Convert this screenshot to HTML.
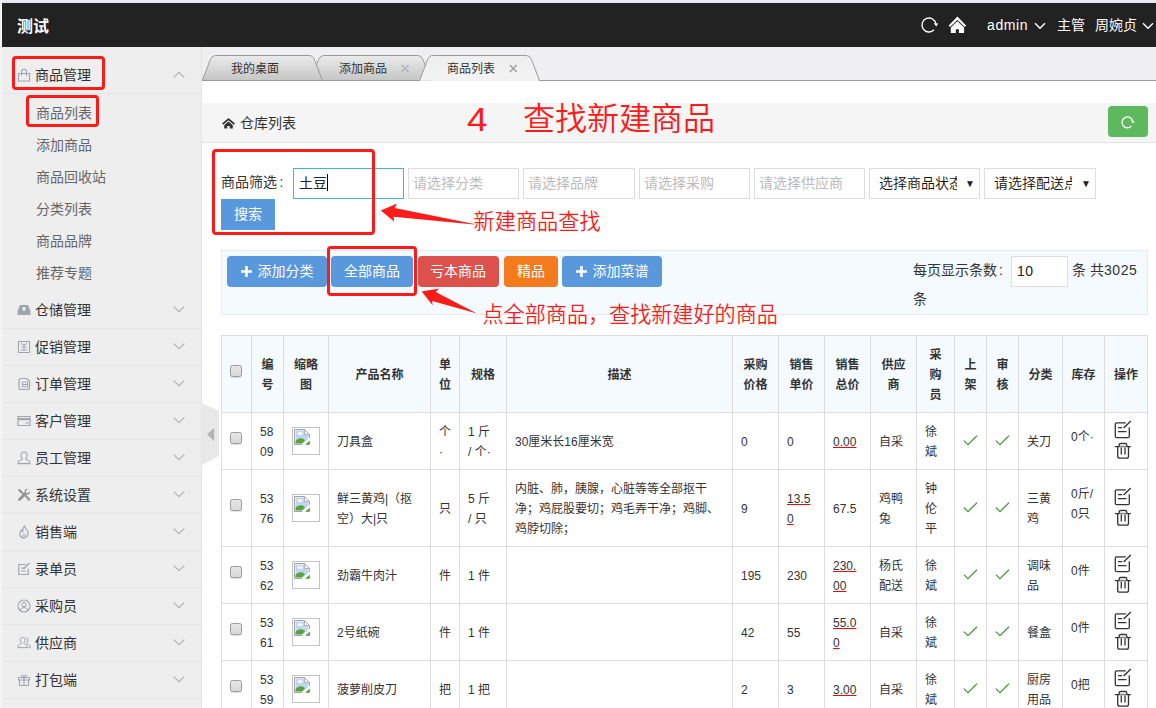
<!DOCTYPE html>
<html lang="zh-CN">
<head>
<meta charset="utf-8">
<title>测试</title>
<style>
*{box-sizing:border-box;margin:0;padding:0}
html,body{width:1156px;height:708px;overflow:hidden;background:#fff}
body{font-family:"Liberation Sans","Noto Sans CJK SC",sans-serif;font-size:14px;color:#333;position:relative}
.abs{position:absolute}
#topstrip{left:0;top:0;width:1156px;height:3px;background:linear-gradient(#ebedf2,#dfe6f5)}
#leftstrip{left:0;top:0;width:2px;height:708px;background:linear-gradient(90deg,#efefef,#fbfbfb);z-index:2}
#header{left:2px;top:3px;width:1154px;height:44px;background:#222}
#header .logo{left:15px;top:1.5px;line-height:44px;color:#fff;font-size:16px;font-weight:700;white-space:nowrap}
#header .r{color:#fff;font-size:14px;line-height:44px;top:0;white-space:nowrap}
#side{left:2px;top:47px;width:200px;height:661px;background:#eee;border-right:1px solid #e4e4e4}
.mi{position:absolute;left:0;width:199px;height:37px;border-bottom:1px solid #e5e5e5;line-height:36px;color:#333;font-size:14px;white-space:nowrap}
.mi .t{position:absolute;left:33px;top:0}
.mi svg.ic{position:absolute;left:15px;top:11px}
.mi svg.ar{position:absolute;left:171px;top:14px}
.si{position:absolute;left:34px;height:32px;line-height:32px;color:#666;font-size:14px;white-space:nowrap}
.redbox{position:absolute;border:3px solid #fb1c1a;border-radius:4px}
#tabbar{left:202px;top:47px;width:954px;height:34px;background:#efeef0}
#tabbar .tt{position:absolute;top:14px;font-size:12px;line-height:16px;color:#333;white-space:nowrap}
#crumb{left:202px;top:103px;width:954px;height:40px;background:#f5f5f5;border-bottom:1px solid #e5e5e5}
.red{color:#fb1c1a;white-space:nowrap;position:absolute;font-family:"Liberation Sans","Noto Sans CJK SC",sans-serif;font-weight:350}
.inp{position:absolute;top:168px;width:111px;height:31px;border:1px solid #ddd;background:#fff;font-size:14px;line-height:29px;padding-left:5px;color:#bbb;white-space:nowrap;overflow:hidden}
.sel{color:#111;font-weight:350}
.btn{position:absolute;height:31px;line-height:31px;color:#fff;font-size:14px;text-align:center;white-space:nowrap}
.rbtn{top:256px;border-radius:4px}
#tool{left:221px;top:250px;width:927px;height:65px;background:#f5fafe;border:1px solid #e6eaee}
table{position:absolute;left:221px;top:335px;width:927px;border-collapse:collapse;table-layout:fixed;font-size:12px;line-height:20px;color:#333}
th,td{border:1px solid #ddd;padding:9px 8px 7px;vertical-align:middle;text-align:left;word-break:break-all;overflow:hidden}
th{background:#f5fafe;font-weight:bold;text-align:center;height:77px}
td.c,th.c{text-align:center}
.cb{display:inline-block;width:12px;height:12px;margin-left:-1px;border:1px solid #9c9c9c;border-radius:2.5px;background:linear-gradient(#e6e6e6,#d8d8d8);vertical-align:middle;position:relative;top:-5px;box-shadow:0 1px 1px rgba(0,0,0,.12)}
.th{display:block;width:28px;height:28px;top:-1px;border:1px solid #c4c4c4;background:#fff;position:relative}
.u{text-decoration:underline;text-decoration-color:#f00;color:#333}
.stk{position:relative;top:-5px;display:block}
.op{display:block;margin:0 0 0 -0.5px;position:relative;top:-2.5px}
</style>
</head>
<body>
<div id="topstrip" class="abs"></div>
<div id="leftstrip" class="abs"></div>
<div id="header" class="abs">
  <div class="abs logo">测试</div>
  <svg class="abs" style="left:915.5px;top:11.2px" width="22" height="22" viewBox="0 0 22 22"><path d="M16.04 15.86 A7 7 0 1 1 17.93 10.03" fill="none" stroke="#fff" stroke-width="1.4"/><path d="M15.70 9.13 L20.30 9.60 L18.30 12.59 Z" fill="#fff"/></svg>
  <svg class="abs" style="left:946px;top:13px" width="20" height="18" viewBox="0 0 20 18"><path d="M9.4 0.6 L0.7 9.5 L2.0 10.9 L9.4 3.9 L16.8 10.9 L18.1 9.5 Z" fill="#fff"/><path d="M9.4 5.2 L2.8 11.4 V16.9 H7.8 V13.2 H10.9 V16.9 H16.1 V11.4 Z" fill="#fff"/></svg>
  <div class="abs r" style="left:985px;letter-spacing:0.6px">admin</div>
  <svg class="abs" style="left:1032px;top:19px" width="12" height="8" viewBox="0 0 12 8"><path d="M1 1.2 L6 6.2 L11 1.2" fill="none" stroke="#fff" stroke-width="1.4"/></svg>
  <div class="abs r" style="left:1055px">主管</div>
  <div class="abs r" style="left:1093px">周婉贞</div>
  <svg class="abs" style="left:1140px;top:19px" width="12" height="8" viewBox="0 0 12 8"><path d="M1 1.2 L6 6.2 L11 1.2" fill="none" stroke="#fff" stroke-width="1.4"/></svg>
</div>
<div id="side" class="abs">
<div class="mi" style="top:10px"><svg class="ic" width="14" height="14" viewBox="0 0 14 14"><path d="M1.5 5.5 H12.5 V13 H1.5 Z" fill="none" stroke="#9fa5b0" stroke-width="1.1"/><path d="M4.6 8 V3.6 A2.4 2.4 0 0 1 9.4 3.6 V8" fill="none" stroke="#9fa5b0" stroke-width="1.1"/></svg><span class="t">商品管理</span><svg class="ar" width="12" height="8" viewBox="0 0 12 8"><path d="M0.8 6.4 L6 1.4 L11.2 6.4" fill="none" stroke="#b2b2b2" stroke-width="1.2"/></svg></div>
<div class="si" style="top:50px">商品列表</div>
<div class="si" style="top:82px">添加商品</div>
<div class="si" style="top:114px">商品回收站</div>
<div class="si" style="top:146px">分类列表</div>
<div class="si" style="top:178px">商品品牌</div>
<div class="si" style="top:210px">推荐专题</div>
<div class="mi" style="top:245px"><svg class="ic" width="14" height="14" viewBox="0 0 14 14"><path d="M3 2 H11 L13.5 8 V12 H0.5 V8 Z" fill="#9fa5b0"/><path d="M7 3.4 L9.6 6 H8 V8 H6 V6 H4.4 Z" fill="#eee"/></svg><span class="t">仓储管理</span><svg class="ar" width="12" height="8" viewBox="0 0 12 8"><path d="M0.8 0.6 L6 5.6 L11.2 0.6" fill="none" stroke="#b2b2b2" stroke-width="1.2"/></svg></div>
<div class="mi" style="top:282px"><svg class="ic" width="14" height="14" viewBox="0 0 14 14"><path d="M1.5 1.5 H12.5 V12.5 H1.5 Z" fill="none" stroke="#9fa5b0" stroke-width="1.1"/><path d="M4 3.5 L7 5 L10 3.5 M7 5 V10 M4.5 7 H9.5 M4 10 H10" fill="none" stroke="#9fa5b0" stroke-width="1"/></svg><span class="t">促销管理</span><svg class="ar" width="12" height="8" viewBox="0 0 12 8"><path d="M0.8 0.6 L6 5.6 L11.2 0.6" fill="none" stroke="#b2b2b2" stroke-width="1.2"/></svg></div>
<div class="mi" style="top:319px"><svg class="ic" width="14" height="14" viewBox="0 0 14 14"><path d="M4 1.5 H10 L12.5 4 V10.5 Q12.5 12.5 10.5 12.5 H4 Q2 12.5 2 10.5 V3.5 Q2 1.5 4 1.5 Z" fill="none" stroke="#9fa5b0" stroke-width="1.2"/><path d="M5.5 5 H10.5 V10 H5.5 Z M5.5 7.5 H10.5" fill="none" stroke="#9fa5b0" stroke-width="1"/></svg><span class="t">订单管理</span><svg class="ar" width="12" height="8" viewBox="0 0 12 8"><path d="M0.8 0.6 L6 5.6 L11.2 0.6" fill="none" stroke="#b2b2b2" stroke-width="1.2"/></svg></div>
<div class="mi" style="top:356px"><svg class="ic" width="14" height="14" viewBox="0 0 14 14"><path d="M1 2.5 H13 V11.5 H1 Z" fill="none" stroke="#9fa5b0" stroke-width="1.2"/><path d="M1 4 H13 V6.2 H1 Z" fill="#9fa5b0"/><path d="M8.5 9 H11.5" stroke="#9fa5b0" stroke-width="1.2"/></svg><span class="t">客户管理</span><svg class="ar" width="12" height="8" viewBox="0 0 12 8"><path d="M0.8 0.6 L6 5.6 L11.2 0.6" fill="none" stroke="#b2b2b2" stroke-width="1.2"/></svg></div>
<div class="mi" style="top:393px"><svg class="ic" width="14" height="14" viewBox="0 0 14 14"><path d="M7 1 C9 1 10 2.4 10 4.2 C10 6 9.2 7 8.6 7.6 C8.6 8.6 9.6 9 11 9.6 C12.4 10.2 13 10.8 13 12.6 H1 C1 10.8 1.6 10.2 3 9.6 C4.4 9 5.4 8.6 5.4 7.6 C4.8 7 4 6 4 4.2 C4 2.4 5 1 7 1 Z" fill="none" stroke="#9fa5b0" stroke-width="1.1"/></svg><span class="t">员工管理</span><svg class="ar" width="12" height="8" viewBox="0 0 12 8"><path d="M0.8 0.6 L6 5.6 L11.2 0.6" fill="none" stroke="#b2b2b2" stroke-width="1.2"/></svg></div>
<div class="mi" style="top:430px"><svg class="ic" width="14" height="14" viewBox="0 0 14 14"><path d="M1.2 1.2 L3 1 L7.6 6 L6.4 7.2 L1.4 3 Z" fill="#969696"/><path d="M12.8 3.2 L10.8 5.2 L9 4.8 L8.8 3 L10.8 1 C9 0.4 7.4 1.6 7.6 4 L1.2 11 C0.4 12 2 13.6 3 12.8 L10 6.4 C12.2 6.8 13.6 5 12.8 3.2 Z" fill="#969696"/><path d="M8 8.4 L9.4 7 L13 10.8 C13.8 11.8 12.4 13.4 11.4 12.4 Z" fill="#969696"/></svg><span class="t">系统设置</span><svg class="ar" width="12" height="8" viewBox="0 0 12 8"><path d="M0.8 0.6 L6 5.6 L11.2 0.6" fill="none" stroke="#b2b2b2" stroke-width="1.2"/></svg></div>
<div class="mi" style="top:467px"><svg class="ic" width="14" height="14" viewBox="0 0 14 14"><path d="M7.4 0.8 C7.8 3 10 4.2 10.8 6.4 C11.8 9.4 10 13 7 13 C4 13 2.2 10.4 3 7.6 C3.4 6.4 4 5.8 4.4 5 C4.8 6 5 6.4 5.8 6.8 C5.6 4.4 6 2.4 7.4 0.8 Z" fill="none" stroke="#9fa5b0" stroke-width="1.1"/><path d="M7 13 C5.6 12.4 5.2 10.8 6.2 9.6 C6.6 10.4 7.4 10.2 7.6 9 C8.8 10 8.8 12.4 7 13 Z" fill="none" stroke="#9fa5b0" stroke-width="0.9"/></svg><span class="t">销售端</span><svg class="ar" width="12" height="8" viewBox="0 0 12 8"><path d="M0.8 0.6 L6 5.6 L11.2 0.6" fill="none" stroke="#b2b2b2" stroke-width="1.2"/></svg></div>
<div class="mi" style="top:504px"><svg class="ic" width="14" height="14" viewBox="0 0 14 14"><path d="M9 2.5 H1.8 V12.5 H11.2 V6.5" fill="none" stroke="#9fa5b0" stroke-width="1.2"/><path d="M6.5 7 L12.5 1" stroke="#9fa5b0" stroke-width="1.3"/><path d="M4 6 H7 M4 9 H9" stroke="#9fa5b0" stroke-width="1.1"/></svg><span class="t">录单员</span><svg class="ar" width="12" height="8" viewBox="0 0 12 8"><path d="M0.8 0.6 L6 5.6 L11.2 0.6" fill="none" stroke="#b2b2b2" stroke-width="1.2"/></svg></div>
<div class="mi" style="top:541px"><svg class="ic" width="14" height="14" viewBox="0 0 14 14"><circle cx="7" cy="7" r="6" fill="none" stroke="#9fa5b0" stroke-width="1.1"/><circle cx="7" cy="5.6" r="2.1" fill="none" stroke="#9fa5b0" stroke-width="1"/><path d="M3.2 11.4 C3.6 9.2 5.2 8.6 7 8.6 C8.8 8.6 10.4 9.2 10.8 11.4" fill="none" stroke="#9fa5b0" stroke-width="1"/></svg><span class="t">采购员</span><svg class="ar" width="12" height="8" viewBox="0 0 12 8"><path d="M0.8 0.6 L6 5.6 L11.2 0.6" fill="none" stroke="#b2b2b2" stroke-width="1.2"/></svg></div>
<div class="mi" style="top:578px"><svg class="ic" width="14" height="14" viewBox="0 0 14 14"><path d="M5.6 1.4 C7.2 1.4 8 2.6 8 4 C8 5.4 7.4 6.4 6.8 6.9 C6.8 7.8 7.6 8.2 8.8 8.7 C10 9.2 10.4 9.8 10.4 11.6 H0.8 C0.8 9.8 1.2 9.2 2.4 8.7 C3.6 8.2 4.4 7.8 4.4 6.9 C3.8 6.4 3.2 5.4 3.2 4 C3.2 2.6 4 1.4 5.6 1.4 Z" fill="none" stroke="#9fa5b0" stroke-width="1"/><path d="M8.6 1.6 C10.2 1.4 11 2.8 11 4 C11 5.4 10.4 6.4 9.8 6.9 C9.8 7.8 10.4 8.2 11.4 8.6 C12.8 9.2 13.2 9.8 13.2 11.6 H11.6" fill="none" stroke="#9fa5b0" stroke-width="1"/></svg><span class="t">供应商</span><svg class="ar" width="12" height="8" viewBox="0 0 12 8"><path d="M0.8 0.6 L6 5.6 L11.2 0.6" fill="none" stroke="#b2b2b2" stroke-width="1.2"/></svg></div>
<div class="mi" style="top:615px"><svg class="ic" width="14" height="14" viewBox="0 0 14 14"><path d="M1.5 4.5 H12.5 V7 H1.5 Z M2.5 7 V12.5 H11.5 V7 M7 4.5 V12.5" fill="none" stroke="#9fa5b0" stroke-width="1.1"/><path d="M7 4.3 C5.4 4 4 3.2 4.6 2.2 C5.2 1.2 6.6 2.4 7 4.3 C7.4 2.4 8.8 1.2 9.4 2.2 C10 3.2 8.6 4 7 4.3 Z" fill="none" stroke="#9fa5b0" stroke-width="1"/></svg><span class="t">打包端</span><svg class="ar" width="12" height="8" viewBox="0 0 12 8"><path d="M0.8 0.6 L6 5.6 L11.2 0.6" fill="none" stroke="#b2b2b2" stroke-width="1.2"/></svg></div>
<div class="mi" style="top:652px"></div>
</div>
<div class="redbox" style="left:12px;top:56px;width:93px;height:34px"></div>
<div class="redbox" style="left:26px;top:95px;width:73px;height:32px"></div>
<svg class="abs" style="left:202px;top:403px" width="18" height="63" viewBox="0 0 18 63"><path d="M0 0 L17 8 L17 53 L0 62 Z" fill="#e8e8e8"/><path d="M12.2 25 L5 31.5 L12.2 38 Z" fill="#b2b2b2"/></svg>
<div id="tabbar" class="abs">
<svg class="abs" style="left:0;top:0" width="954" height="34" viewBox="0 0 954 34">
<defs><linearGradient id="tg" x1="0" y1="0" x2="0" y2="1"><stop offset="0" stop-color="#ebebeb"/><stop offset="1" stop-color="#c6c6c6"/></linearGradient>
<linearGradient id="ta" x1="0" y1="0" x2="0" y2="1"><stop offset="0" stop-color="#eeeeef"/><stop offset="1" stop-color="#f3f3f3"/></linearGradient></defs>
<path d="M108.5 33.5 L116.5 12.6 Q118.1 8.5 121.7 8.5 L215.8 8.5 Q219.4 8.5 221.0 12.6 L229 33.5" fill="url(#tg)" stroke="#9a9a9a" stroke-width="1"/>
<path d="M0.3 33.5 L8.3 12.6 Q9.9 8.5 13.5 8.5 L107.2 8.5 Q110.8 8.5 112.4 12.6 L120.4 33.5" fill="url(#tg)" stroke="#9a9a9a" stroke-width="1"/>
<path d="M0 33.5 H218 M337 33.5 H954" stroke="#9a9a9a" stroke-width="1"/>
<path d="M217.6 33.5 L225.6 12.6 Q227.2 8.5 230.8 8.5 L324.3 8.5 Q327.9 8.5 329.5 12.6 L337.5 33.5" fill="url(#ta)" stroke="#9a9a9a" stroke-width="1"/>
<path d="M199.6 18 l7 7 m0 -7 l-7 7" stroke="#aab0ba" stroke-width="1.2"/>
<path d="M307.8 18 l7 7 m0 -7 l-7 7" stroke="#999" stroke-width="1.2"/>
</svg>
<div class="tt" style="left:29px">我的桌面</div>
<div class="tt" style="left:137px">添加商品</div>
<div class="tt" style="left:245px">商品列表</div>
</div>
<div id="crumb" class="abs">
<svg class="abs" style="left:20px;top:15px" width="13" height="11" viewBox="0 0 13 11"><path d="M6.5 0 L0 5.6 L1.3 6.8 L6.5 2.3 L11.7 6.8 L13 5.6 Z" fill="#333"/><path d="M6.5 3.6 L2.2 7.3 V10.6 H5.3 V8 H7.7 V10.6 H10.8 V7.3 Z" fill="#333"/></svg>
<div class="abs" style="left:38px;top:0;line-height:40px;font-size:14px;color:#333;white-space:nowrap">仓库列表</div>
<div class="abs" style="left:906px;top:3px;width:40px;height:31px;background:#5eb95e;border-radius:4px"></div>
<svg class="abs" style="left:916.0px;top:9.5px" width="18.8" height="18.8" viewBox="0 0 18.8 18.8"><path d="M13.28 13.15 A5.4 5.4 0 1 1 14.75 8.65" fill="none" stroke="#fff" stroke-width="1.3"/><path d="M12.90 7.76 L16.70 8.14 L15.10 10.61 Z" fill="#fff"/></svg>
</div>
<div class="red" style="left:467px;top:95.6px;font-size:34px;line-height:46px;transform:scaleX(1.09);transform-origin:0 0">4</div>
<div class="red" style="left:523px;top:96px;font-size:32px;line-height:46px">查找新建商品</div>
<div class="abs" style="left:221px;top:168px;line-height:29px;font-size:14px;color:#333;white-space:nowrap">商品筛选<span style="margin-left:2.5px">:</span></div>
<div class="inp" style="left:293px;border-color:#3bb4f2;color:#222">土豆<span style="display:inline-block;width:1px;height:17px;background:#000;vertical-align:-3px"></span></div>
<div class="inp" style="left:408px;padding-left:4px;width:111px">请选择分类</div>
<div class="inp" style="left:523px;padding-left:4px;width:112px">请选择品牌</div>
<div class="inp" style="left:639px;padding-left:4px;width:111px">请选择采购</div>
<div class="inp" style="left:754px;padding-left:4px;width:111px">请选择供应商</div>
<div class="inp sel" style="left:869px;padding-left:9px;width:111px"><span style="display:inline-block;width:78px;overflow:hidden;vertical-align:top">选择商品状态</span><span style="position:absolute;right:4px;top:0;font-size:10px;color:#222">▼</span></div>
<div class="inp sel" style="left:984px;padding-left:9px;width:112px"><span style="display:inline-block;width:78px;overflow:hidden;vertical-align:top">请选择配送点</span><span style="position:absolute;right:4px;top:0;font-size:10px;color:#222">▼</span></div>
<div class="btn" style="left:221px;top:199px;width:54px;background:#5a98de">搜索</div>
<div class="redbox" style="left:212px;top:149px;width:163px;height:86px"></div>
<svg class="abs" style="left:378px;top:200px" width="100" height="28" viewBox="378 200 100 28"><path d="M380.8 210.5 L397.1 203.6 L394.6 207.9 L474.2 224 L474.2 224.5 L393.6 216.7 L394.1 221.5 Z" fill="#fb1c1a"/></svg>
<div class="red" style="left:473.5px;top:207px;font-size:21.2px;line-height:30px">新建商品查找</div>
<div id="tool" class="abs"></div>
<div class="btn rbtn" style="left:227px;width:100px;background:#5a98de"><svg width="11" height="11" viewBox="0 0 11 11" style="margin-right:6px;position:relative;top:0.5px"><path d="M5.5 0 V11 M0 5.5 H11" stroke="#fff" stroke-width="2.6"/></svg>添加分类</div>
<div class="btn rbtn" style="left:331px;width:82px;background:#5a98de">全部商品</div>
<div class="btn rbtn" style="left:417.6px;width:81px;background:#dd514c">亏本商品</div>
<div class="btn rbtn" style="left:504px;width:54px;background:#f37b1d">精品</div>
<div class="btn rbtn" style="left:562px;width:100px;background:#5a98de"><svg width="11" height="11" viewBox="0 0 11 11" style="margin-right:6px;position:relative;top:0.5px"><path d="M5.5 0 V11 M0 5.5 H11" stroke="#fff" stroke-width="2.6"/></svg>添加菜谱</div>
<div class="abs" style="left:913px;top:255px;line-height:30px;font-size:14px;color:#333;white-space:nowrap">每页显示条数<span style="margin-left:2px">:</span></div>
<div class="abs" style="left:1011px;top:256px;width:57px;height:31px;border:1px solid #ddd;background:#fff;line-height:29px;padding-left:5px;font-size:14px;color:#222;letter-spacing:0.5px">10</div>
<div class="abs" style="left:1072px;top:255px;line-height:30px;font-size:14px;color:#333;white-space:nowrap">条 共<span style="letter-spacing:0.6px">3025</span></div>
<div class="abs" style="left:913px;top:284px;line-height:30px;font-size:14px;color:#333;white-space:nowrap">条</div>
<div class="redbox" style="left:327px;top:246px;width:90px;height:50px"></div>
<svg class="abs" style="left:418px;top:284px" width="64" height="34" viewBox="418 284 64 34"><path d="M421.7 291.5 L439.2 288.4 L435.7 292.1 L477 313.6 L432.2 301 L432.6 305.3 Z" fill="#fb1c1a"/></svg>
<div class="red" style="left:482.5px;top:299.5px;font-size:21.1px;line-height:30px">点全部商品，查找新建好的商品</div>
<table><colgroup><col style="width:30px"><col style="width:32px"><col style="width:45px"><col style="width:102px"><col style="width:29px"><col style="width:47px"><col style="width:226px"><col style="width:46px"><col style="width:46px"><col style="width:46px"><col style="width:46px"><col style="width:38px"><col style="width:32px"><col style="width:32px"><col style="width:44px"><col style="width:42px"><col style="width:43px"></colgroup>
<thead><tr><th><span class="cb"></span></th><th>编<br>号</th><th>缩略<br>图</th><th>产品名称</th><th>单<br>位</th><th>规格</th><th>描述</th><th>采购<br>价格</th><th>销售<br>单价</th><th>销售<br>总价</th><th>供应<br>商</th><th>采<br>购<br>员</th><th>上<br>架</th><th>审<br>核</th><th>分类</th><th>库存</th><th>操作</th></tr></thead>
<tbody>
<tr style="height:57px"><td class="c"><span class="cb"></span></td><td>58<br>09</td><td><span class="th"><svg style="position:absolute;left:1px;top:1px" width="17" height="17" viewBox="0 0 17 17"><path d="M0.5 0.5 H10.5 L15.5 5.5 V15.5 H0.5 Z" fill="#fff" stroke="#a4a4a4" stroke-width="1"/><path d="M1.5 1.5 H10 L14.5 6 V14.5 H1.5 Z" fill="#c2d6f2"/><path d="M10.5 0.5 V5.5 H15.5 Z" fill="#f4f4f4" stroke="#a4a4a4" stroke-width="0.8"/><ellipse cx="6" cy="4.6" rx="2.6" ry="1.3" fill="#fff"/><path d="M1.5 14.5 V12 C4 8.6 8.5 8.6 11 11.2 L8 14.5 Z" fill="#57a53a"/><path d="M7.4 16 L16 8.6 V11.4 L11 16 Z" fill="#fff"/><path d="M11.4 15.5 L15.5 11.8 V15.5 Z" fill="#57a53a"/><path d="M0.5 15.5 H8" stroke="#a4a4a4" stroke-width="1"/></svg></span></td><td>刀具盒</td><td>个<br>·</td><td>1 斤<br>/ 个·</td><td>30厘米长16厘米宽</td><td>0</td><td>0</td><td><span class="u">0.00</span></td><td>自采</td><td>徐<br>斌</td><td class="c"><svg width="15" height="11" viewBox="0 0 15 11" style="vertical-align:middle;position:relative;top:-2px"><path d="M0.8 5.6 L5 9.6 L14 0.8" fill="none" stroke="#46983a" stroke-width="1.25"/></svg></td><td class="c"><svg width="15" height="11" viewBox="0 0 15 11" style="vertical-align:middle;position:relative;top:-2px"><path d="M0.8 5.6 L5 9.6 L14 0.8" fill="none" stroke="#46983a" stroke-width="1.25"/></svg></td><td>关刀</td><td><span class="stk">0个·</span></td><td><svg class="op" width="19" height="19" viewBox="0 0 19 19"><path d="M12.8 2.8 H3.8 Q2.3 2.8 2.3 4.3 V16.2 Q2.3 17.7 3.8 17.7 H14.8 Q16.3 17.7 16.3 16.2 V7.2" fill="none" stroke="#333" stroke-width="1.3"/><path d="M10.6 8 L17.8 0.9" stroke="#333" stroke-width="1.4"/><path d="M5 7.6 H9.2 M5 11.6 H13.4" stroke="#333" stroke-width="1.3"/></svg><svg class="op" style="margin-top:3px" width="19" height="17" viewBox="0 0 19 17"><path d="M2 4.6 H17.8" fill="none" stroke="#333" stroke-width="1.2"/><path d="M6.2 4.4 V3 Q6.2 1.4 7.8 1.4 H12.2 Q13.8 1.4 13.8 3 V4.4" fill="#ddd" stroke="#333" stroke-width="1.3"/><path d="M4.7 4.6 V14.2 Q4.7 16.1 6.6 16.1 H13.6 Q15.5 16.1 15.5 14.2 V4.6" fill="none" stroke="#333" stroke-width="1.3"/><path d="M8.3 5.4 V12.6 M12 5.4 V12.6" stroke="#333" stroke-width="1.3"/></svg></td></tr>
<tr style="height:77px"><td class="c"><span class="cb"></span></td><td>53<br>76</td><td><span class="th"><svg style="position:absolute;left:1px;top:1px" width="17" height="17" viewBox="0 0 17 17"><path d="M0.5 0.5 H10.5 L15.5 5.5 V15.5 H0.5 Z" fill="#fff" stroke="#a4a4a4" stroke-width="1"/><path d="M1.5 1.5 H10 L14.5 6 V14.5 H1.5 Z" fill="#c2d6f2"/><path d="M10.5 0.5 V5.5 H15.5 Z" fill="#f4f4f4" stroke="#a4a4a4" stroke-width="0.8"/><ellipse cx="6" cy="4.6" rx="2.6" ry="1.3" fill="#fff"/><path d="M1.5 14.5 V12 C4 8.6 8.5 8.6 11 11.2 L8 14.5 Z" fill="#57a53a"/><path d="M7.4 16 L16 8.6 V11.4 L11 16 Z" fill="#fff"/><path d="M11.4 15.5 L15.5 11.8 V15.5 Z" fill="#57a53a"/><path d="M0.5 15.5 H8" stroke="#a4a4a4" stroke-width="1"/></svg></span></td><td>鲜三黄鸡|（抠<br>空）大|只</td><td>只</td><td>5 斤<br>/ 只</td><td>内脏、肺，胰腺，心脏等等全部抠干<br>净；鸡屁股要切；鸡毛弄干净；鸡脚、<br>鸡脖切除；</td><td>9</td><td><span class="u">13.5<br>0</span></td><td>67.5</td><td>鸡鸭<br>兔</td><td>钟<br>伦<br>平</td><td class="c"><svg width="15" height="11" viewBox="0 0 15 11" style="vertical-align:middle;position:relative;top:-2px"><path d="M0.8 5.6 L5 9.6 L14 0.8" fill="none" stroke="#46983a" stroke-width="1.25"/></svg></td><td class="c"><svg width="15" height="11" viewBox="0 0 15 11" style="vertical-align:middle;position:relative;top:-2px"><path d="M0.8 5.6 L5 9.6 L14 0.8" fill="none" stroke="#46983a" stroke-width="1.25"/></svg></td><td>三黄<br>鸡</td><td><span class="stk">0斤/<br>0只</span></td><td><svg class="op" width="19" height="19" viewBox="0 0 19 19"><path d="M12.8 2.8 H3.8 Q2.3 2.8 2.3 4.3 V16.2 Q2.3 17.7 3.8 17.7 H14.8 Q16.3 17.7 16.3 16.2 V7.2" fill="none" stroke="#333" stroke-width="1.3"/><path d="M10.6 8 L17.8 0.9" stroke="#333" stroke-width="1.4"/><path d="M5 7.6 H9.2 M5 11.6 H13.4" stroke="#333" stroke-width="1.3"/></svg><svg class="op" style="margin-top:3px" width="19" height="17" viewBox="0 0 19 17"><path d="M2 4.6 H17.8" fill="none" stroke="#333" stroke-width="1.2"/><path d="M6.2 4.4 V3 Q6.2 1.4 7.8 1.4 H12.2 Q13.8 1.4 13.8 3 V4.4" fill="#ddd" stroke="#333" stroke-width="1.3"/><path d="M4.7 4.6 V14.2 Q4.7 16.1 6.6 16.1 H13.6 Q15.5 16.1 15.5 14.2 V4.6" fill="none" stroke="#333" stroke-width="1.3"/><path d="M8.3 5.4 V12.6 M12 5.4 V12.6" stroke="#333" stroke-width="1.3"/></svg></td></tr>
<tr style="height:57px"><td class="c"><span class="cb"></span></td><td>53<br>62</td><td><span class="th"><svg style="position:absolute;left:1px;top:1px" width="17" height="17" viewBox="0 0 17 17"><path d="M0.5 0.5 H10.5 L15.5 5.5 V15.5 H0.5 Z" fill="#fff" stroke="#a4a4a4" stroke-width="1"/><path d="M1.5 1.5 H10 L14.5 6 V14.5 H1.5 Z" fill="#c2d6f2"/><path d="M10.5 0.5 V5.5 H15.5 Z" fill="#f4f4f4" stroke="#a4a4a4" stroke-width="0.8"/><ellipse cx="6" cy="4.6" rx="2.6" ry="1.3" fill="#fff"/><path d="M1.5 14.5 V12 C4 8.6 8.5 8.6 11 11.2 L8 14.5 Z" fill="#57a53a"/><path d="M7.4 16 L16 8.6 V11.4 L11 16 Z" fill="#fff"/><path d="M11.4 15.5 L15.5 11.8 V15.5 Z" fill="#57a53a"/><path d="M0.5 15.5 H8" stroke="#a4a4a4" stroke-width="1"/></svg></span></td><td>劲霸牛肉汁</td><td>件</td><td>1 件</td><td></td><td>195</td><td>230</td><td><span class="u">230.<br>00</span></td><td>杨氏<br>配送</td><td>徐<br>斌</td><td class="c"><svg width="15" height="11" viewBox="0 0 15 11" style="vertical-align:middle;position:relative;top:-2px"><path d="M0.8 5.6 L5 9.6 L14 0.8" fill="none" stroke="#46983a" stroke-width="1.25"/></svg></td><td class="c"><svg width="15" height="11" viewBox="0 0 15 11" style="vertical-align:middle;position:relative;top:-2px"><path d="M0.8 5.6 L5 9.6 L14 0.8" fill="none" stroke="#46983a" stroke-width="1.25"/></svg></td><td>调味<br>品</td><td><span class="stk">0件</span></td><td><svg class="op" width="19" height="19" viewBox="0 0 19 19"><path d="M12.8 2.8 H3.8 Q2.3 2.8 2.3 4.3 V16.2 Q2.3 17.7 3.8 17.7 H14.8 Q16.3 17.7 16.3 16.2 V7.2" fill="none" stroke="#333" stroke-width="1.3"/><path d="M10.6 8 L17.8 0.9" stroke="#333" stroke-width="1.4"/><path d="M5 7.6 H9.2 M5 11.6 H13.4" stroke="#333" stroke-width="1.3"/></svg><svg class="op" style="margin-top:3px" width="19" height="17" viewBox="0 0 19 17"><path d="M2 4.6 H17.8" fill="none" stroke="#333" stroke-width="1.2"/><path d="M6.2 4.4 V3 Q6.2 1.4 7.8 1.4 H12.2 Q13.8 1.4 13.8 3 V4.4" fill="#ddd" stroke="#333" stroke-width="1.3"/><path d="M4.7 4.6 V14.2 Q4.7 16.1 6.6 16.1 H13.6 Q15.5 16.1 15.5 14.2 V4.6" fill="none" stroke="#333" stroke-width="1.3"/><path d="M8.3 5.4 V12.6 M12 5.4 V12.6" stroke="#333" stroke-width="1.3"/></svg></td></tr>
<tr style="height:57px"><td class="c"><span class="cb"></span></td><td>53<br>61</td><td><span class="th"><svg style="position:absolute;left:1px;top:1px" width="17" height="17" viewBox="0 0 17 17"><path d="M0.5 0.5 H10.5 L15.5 5.5 V15.5 H0.5 Z" fill="#fff" stroke="#a4a4a4" stroke-width="1"/><path d="M1.5 1.5 H10 L14.5 6 V14.5 H1.5 Z" fill="#c2d6f2"/><path d="M10.5 0.5 V5.5 H15.5 Z" fill="#f4f4f4" stroke="#a4a4a4" stroke-width="0.8"/><ellipse cx="6" cy="4.6" rx="2.6" ry="1.3" fill="#fff"/><path d="M1.5 14.5 V12 C4 8.6 8.5 8.6 11 11.2 L8 14.5 Z" fill="#57a53a"/><path d="M7.4 16 L16 8.6 V11.4 L11 16 Z" fill="#fff"/><path d="M11.4 15.5 L15.5 11.8 V15.5 Z" fill="#57a53a"/><path d="M0.5 15.5 H8" stroke="#a4a4a4" stroke-width="1"/></svg></span></td><td>2号纸碗</td><td>件</td><td>1 件</td><td></td><td>42</td><td>55</td><td><span class="u">55.0<br>0</span></td><td>自采</td><td>徐<br>斌</td><td class="c"><svg width="15" height="11" viewBox="0 0 15 11" style="vertical-align:middle;position:relative;top:-2px"><path d="M0.8 5.6 L5 9.6 L14 0.8" fill="none" stroke="#46983a" stroke-width="1.25"/></svg></td><td class="c"><svg width="15" height="11" viewBox="0 0 15 11" style="vertical-align:middle;position:relative;top:-2px"><path d="M0.8 5.6 L5 9.6 L14 0.8" fill="none" stroke="#46983a" stroke-width="1.25"/></svg></td><td>餐盒</td><td><span class="stk">0件</span></td><td><svg class="op" width="19" height="19" viewBox="0 0 19 19"><path d="M12.8 2.8 H3.8 Q2.3 2.8 2.3 4.3 V16.2 Q2.3 17.7 3.8 17.7 H14.8 Q16.3 17.7 16.3 16.2 V7.2" fill="none" stroke="#333" stroke-width="1.3"/><path d="M10.6 8 L17.8 0.9" stroke="#333" stroke-width="1.4"/><path d="M5 7.6 H9.2 M5 11.6 H13.4" stroke="#333" stroke-width="1.3"/></svg><svg class="op" style="margin-top:3px" width="19" height="17" viewBox="0 0 19 17"><path d="M2 4.6 H17.8" fill="none" stroke="#333" stroke-width="1.2"/><path d="M6.2 4.4 V3 Q6.2 1.4 7.8 1.4 H12.2 Q13.8 1.4 13.8 3 V4.4" fill="#ddd" stroke="#333" stroke-width="1.3"/><path d="M4.7 4.6 V14.2 Q4.7 16.1 6.6 16.1 H13.6 Q15.5 16.1 15.5 14.2 V4.6" fill="none" stroke="#333" stroke-width="1.3"/><path d="M8.3 5.4 V12.6 M12 5.4 V12.6" stroke="#333" stroke-width="1.3"/></svg></td></tr>
<tr style="height:57px"><td class="c"><span class="cb"></span></td><td>53<br>59</td><td><span class="th"><svg style="position:absolute;left:1px;top:1px" width="17" height="17" viewBox="0 0 17 17"><path d="M0.5 0.5 H10.5 L15.5 5.5 V15.5 H0.5 Z" fill="#fff" stroke="#a4a4a4" stroke-width="1"/><path d="M1.5 1.5 H10 L14.5 6 V14.5 H1.5 Z" fill="#c2d6f2"/><path d="M10.5 0.5 V5.5 H15.5 Z" fill="#f4f4f4" stroke="#a4a4a4" stroke-width="0.8"/><ellipse cx="6" cy="4.6" rx="2.6" ry="1.3" fill="#fff"/><path d="M1.5 14.5 V12 C4 8.6 8.5 8.6 11 11.2 L8 14.5 Z" fill="#57a53a"/><path d="M7.4 16 L16 8.6 V11.4 L11 16 Z" fill="#fff"/><path d="M11.4 15.5 L15.5 11.8 V15.5 Z" fill="#57a53a"/><path d="M0.5 15.5 H8" stroke="#a4a4a4" stroke-width="1"/></svg></span></td><td>菠萝削皮刀</td><td>把</td><td>1 把</td><td></td><td>2</td><td>3</td><td><span class="u">3.00</span></td><td>自采</td><td>徐<br>斌</td><td class="c"><svg width="15" height="11" viewBox="0 0 15 11" style="vertical-align:middle;position:relative;top:-2px"><path d="M0.8 5.6 L5 9.6 L14 0.8" fill="none" stroke="#46983a" stroke-width="1.25"/></svg></td><td class="c"><svg width="15" height="11" viewBox="0 0 15 11" style="vertical-align:middle;position:relative;top:-2px"><path d="M0.8 5.6 L5 9.6 L14 0.8" fill="none" stroke="#46983a" stroke-width="1.25"/></svg></td><td>厨房<br>用品</td><td><span class="stk">0把</span></td><td><svg class="op" width="19" height="19" viewBox="0 0 19 19"><path d="M12.8 2.8 H3.8 Q2.3 2.8 2.3 4.3 V16.2 Q2.3 17.7 3.8 17.7 H14.8 Q16.3 17.7 16.3 16.2 V7.2" fill="none" stroke="#333" stroke-width="1.3"/><path d="M10.6 8 L17.8 0.9" stroke="#333" stroke-width="1.4"/><path d="M5 7.6 H9.2 M5 11.6 H13.4" stroke="#333" stroke-width="1.3"/></svg><svg class="op" style="margin-top:3px" width="19" height="17" viewBox="0 0 19 17"><path d="M2 4.6 H17.8" fill="none" stroke="#333" stroke-width="1.2"/><path d="M6.2 4.4 V3 Q6.2 1.4 7.8 1.4 H12.2 Q13.8 1.4 13.8 3 V4.4" fill="#ddd" stroke="#333" stroke-width="1.3"/><path d="M4.7 4.6 V14.2 Q4.7 16.1 6.6 16.1 H13.6 Q15.5 16.1 15.5 14.2 V4.6" fill="none" stroke="#333" stroke-width="1.3"/><path d="M8.3 5.4 V12.6 M12 5.4 V12.6" stroke="#333" stroke-width="1.3"/></svg></td></tr>
</tbody></table>

</body>
</html>
